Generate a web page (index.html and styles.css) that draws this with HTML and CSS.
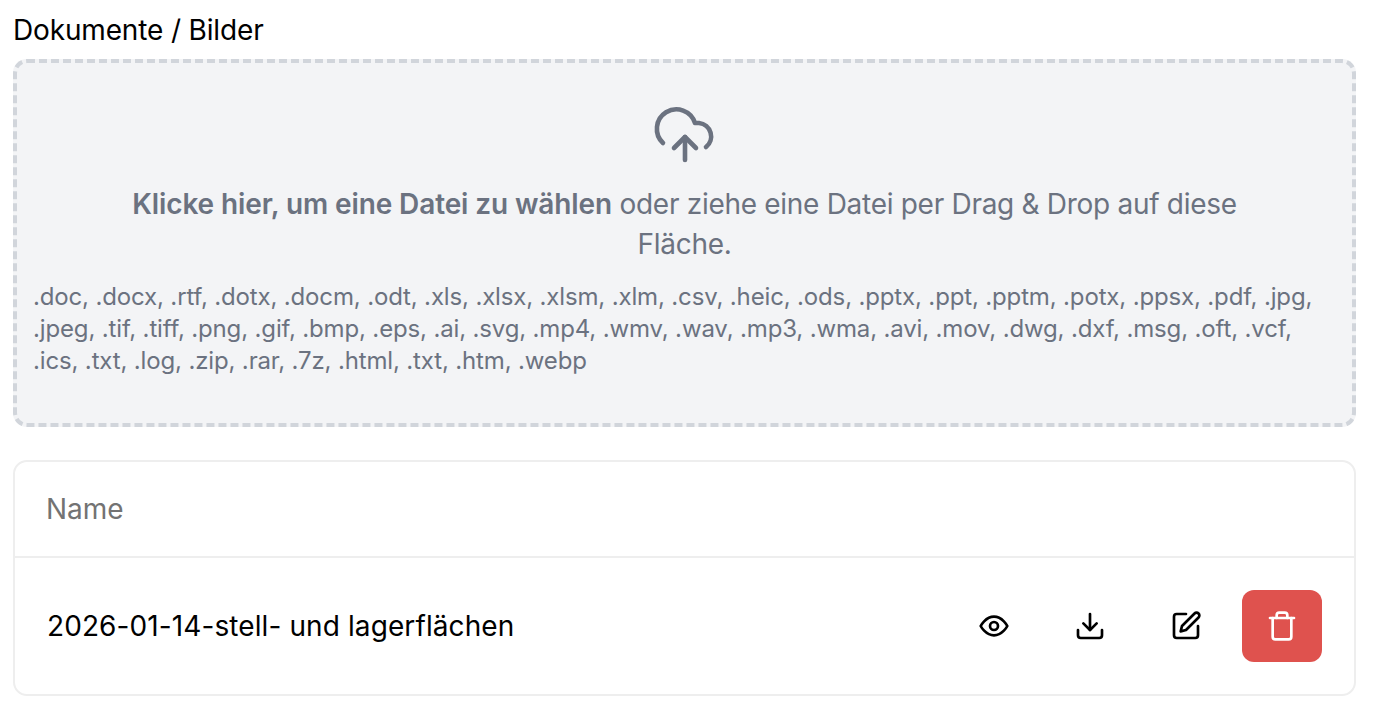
FILE: index.html
```html
<!DOCTYPE html>
<html lang="de">
<head>
  <meta charset="UTF-8">
  <meta name="viewport" content="width=device-width, initial-scale=1.0">
  <title>Dokumente / Bilder</title>
  <link rel="stylesheet" href="styles.css">
</head>
<body>
  <div class="field-label">Dokumente / Bilder</div>
  <div class="dropzone">
    <svg class="upload-icon" viewBox="0 0 64 64" fill="none" stroke="currentColor" stroke-width="4.6" stroke-linecap="round" stroke-linejoin="round">
      <path d="M10 43A19.5 19.5 0 1 1 42 23h4A13.5 13.5 0 0 1 53 47"/>
      <path d="M32 60V37"/>
      <path d="M21 48 32 37 43 48"/>
    </svg>
    <p class="drop-text"><strong>Klicke hier, um eine Datei zu wählen</strong> oder ziehe eine Datei per Drag &amp; Drop auf diese Fläche.</p>
    <p class="file-types">.doc, .docx, .rtf, .dotx, .docm, .odt, .xls, .xlsx, .xlsm, .xlm, .csv, .heic, .ods, .pptx, .ppt, .pptm, .potx, .ppsx, .pdf, .jpg, .jpeg, .tif, .tiff, .png, .gif, .bmp, .eps, .ai, .svg, .mp4, .wmv, .wav, .mp3, .wma, .avi, .mov, .dwg, .dxf, .msg, .oft, .vcf, .ics, .txt, .log, .zip, .rar, .7z, .html, .txt, .htm, .webp</p>
  </div>

  <div class="file-table">
    <div class="table-head">Name</div>
    <div class="table-row">
      <span class="file-name">2026-01-14-stell- und lagerflächen</span>
      <div class="actions">
        <button class="action">
          <svg viewBox="0 0 24 24" fill="none" stroke="currentColor" stroke-width="2" stroke-linecap="round" stroke-linejoin="round">
            <path d="M2 12s3.6-7 10-7 10 7 10 7-3.6 7-10 7-10-7-10-7Z"/>
            <circle cx="12" cy="12" r="3"/>
          </svg>
        </button>
        <button class="action">
          <svg viewBox="0 0 24 24" fill="none" stroke="currentColor" stroke-width="2" stroke-linecap="round" stroke-linejoin="round">
            <path d="M21 15v4a2 2 0 0 1-2 2H5a2 2 0 0 1-2-2v-4"/>
            <path d="m7 10 5 5 5-5"/>
            <path d="M12 15V3"/>
          </svg>
        </button>
        <button class="action">
          <svg viewBox="0 0 24 24" fill="none" stroke="currentColor" stroke-width="2" stroke-linecap="round" stroke-linejoin="round">
            <path d="M12 3H5a2 2 0 0 0-2 2v14a2 2 0 0 0 2 2h14a2 2 0 0 0 2-2v-7"/>
            <path d="M18.4 2.6a2.1 2.1 0 1 1 3 3L12 15l-4 1 1-4Z"/>
          </svg>
        </button>
        <button class="action delete">
          <svg viewBox="0 0 24 24" fill="none" stroke="currentColor" stroke-width="2" stroke-linecap="round" stroke-linejoin="round">
            <path d="M3 6h18"/>
            <path d="M19 6v14a2 2 0 0 1-2 2H7a2 2 0 0 1-2-2V6"/>
            <path d="M8 6V4a2 2 0 0 1 2-2h4a2 2 0 0 1 2 2v2"/>
          </svg>
        </button>
      </div>
    </div>
  </div>
</body>
</html>
```

FILE: styles.css
```css
* {
  margin: 0;
  padding: 0;
  box-sizing: border-box;
}
body {
  font-family: Inter, "Liberation Sans", sans-serif;
  background-color: #fff;
  color: #000;
  padding: 13px 24px 0 13px;
}
.field-label {
  font-size: 28px;
  line-height: 34px;
  letter-spacing: -0.15px;
  margin-bottom: 12px;
}
.dropzone {
  height: 368px;
  background-color: #f3f4f6;
  border: 4px dashed #d1d5db;
  border-radius: 14px;
  padding: 37px 16px 0;
  color: #6b7280;
  display: flex;
  flex-direction: column;
  align-items: center;
}
.upload-icon {
  width: 64px;
  height: 64px;
  margin-bottom: 20px;
}
.drop-text {
  width: 1120px;
  font-size: 28px;
  line-height: 40px;
  letter-spacing: -0.29px;
  text-align: center;
}
.drop-text strong {
  font-weight: 600;
  letter-spacing: -0.12px;
}
.file-types {
  width: 100%;
  font-size: 24px;
  line-height: 32px;
  letter-spacing: -0.15px;
  margin-top: 17px;
}
.file-table {
  margin-top: 33px;
  height: 236px;
  border: 2px solid #eeeeee;
  border-radius: 14px;
}
.table-head {
  height: 96px;
  border-bottom: 2px solid #eeeeee;
  padding: 0 31px;
  display: flex;
  align-items: center;
  font-size: 28px;
  color: #737373;
}
.table-row {
  height: 136px;
  padding: 0 32px;
  display: flex;
  align-items: center;
  justify-content: space-between;
}
.file-name {
  font-size: 28px;
  letter-spacing: 0.1px;
}
.actions {
  display: flex;
  gap: 16px;
}
.action {
  width: 80px;
  height: 72px;
  border: none;
  border-radius: 12px;
  background: none;
  color: #000;
  display: flex;
  align-items: center;
  justify-content: center;
}
.action svg {
  width: 32px;
  height: 32px;
}
.delete {
  background-color: #df524e;
  color: #fff;
}
```
